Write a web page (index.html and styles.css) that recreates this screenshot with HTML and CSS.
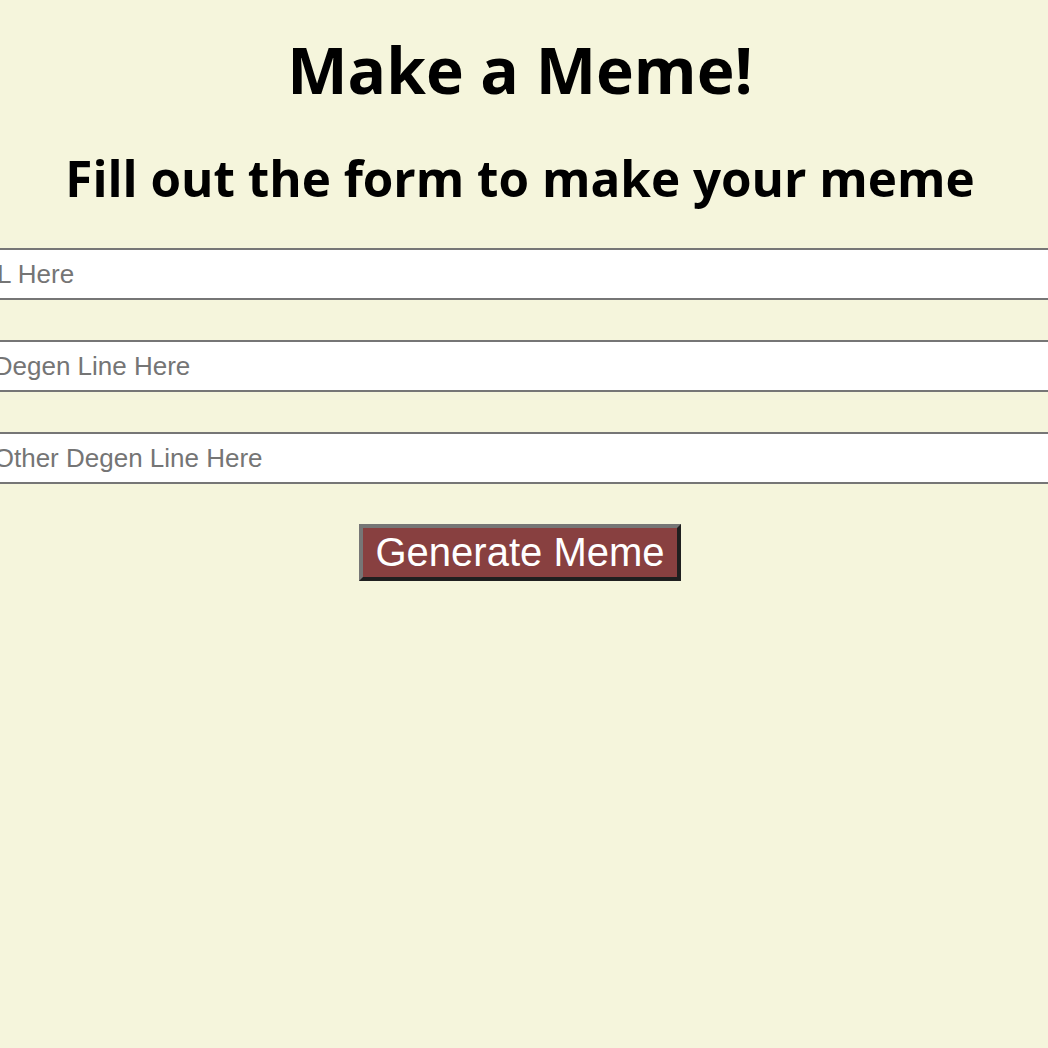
FILE: index.html
```html
<!DOCTYPE html>
<html lang="en">
<head>
<meta charset="utf-8">
<title>Make a Meme!</title>
<link rel="stylesheet" href="styles.css">
</head>
<body>
<main class="page">
  <h1 class="title">Make a Meme!</h1>
  <h2 class="subtitle">Fill out the form to make your meme</h2>
  <form class="meme-form">
    <input class="field field--url" type="text" placeholder="Image URL Here">
    <input class="field" type="text" placeholder="Your Degen Line Here">
    <input class="field" type="text" placeholder="Your Other Degen Line Here">
    <button class="generate" type="button">Generate Meme</button>
  </form>
</main>
</body>
</html>
```

FILE: styles.css
```css
html {
  overflow: hidden;
  background: #f5f5dc;
}

body {
  margin: 0;
  background: #f5f5dc;
  font-family: "Open Sans", "DejaVu Sans", sans-serif;
  color: #000;
}

.page {
  width: 1040px;
  display: flex;
  flex-direction: column;
  align-items: center;
}

.title {
  margin: 32px 0 0;
  font-size: 64px;
  line-height: 76px;
  font-weight: 700;
  text-align: center;
}

.subtitle {
  margin: 40px 0 0;
  font-size: 49.4px;
  line-height: 60px;
  font-weight: 700;
  text-align: center;
}

.meme-form {
  margin-top: 40px;
  width: 100%;
  display: flex;
  flex-direction: column;
  align-items: center;
  gap: 40px;
}

.field {
  flex: none;
  width: 1200px;
  height: 52px;
  box-sizing: border-box;
  margin: 0;
  padding: 0 0 0 12px;
  border: 2px solid #767676;
  background: #fff;
  font-family: "Liberation Sans", Arial, sans-serif;
  font-size: 26px;
  color: #000;
  outline: none;
}

.field::placeholder {
  color: #757575;
}

.field--url {
  text-indent: -54px;
}

.generate {
  margin: 0;
  padding: 1px 12px;
  border-width: 4px;
  border-style: solid;
  border-color: #767676 #1f1f1f #1f1f1f #767676;
  background: #884040;
  color: #fff;
  font-family: "Liberation Sans", Arial, sans-serif;
  font-size: 40px;
  line-height: 47px;
  cursor: pointer;
}
```
